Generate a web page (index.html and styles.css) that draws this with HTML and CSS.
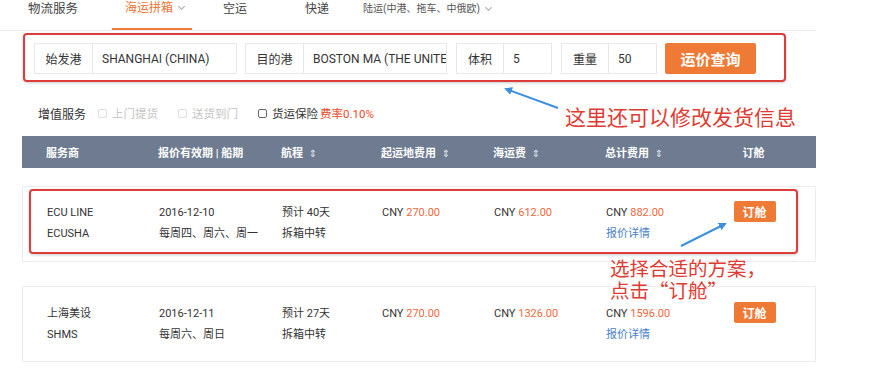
FILE: index.html
```html
<!DOCTYPE html>
<html lang="zh-CN">
<head>
<meta charset="utf-8">
<link rel="stylesheet" href="styles.css">
</head>
<body>
<div class="page">
  <nav class="nav">
    <span class="nav-item nav-title">物流服务</span>
    <span class="nav-item active">海运拼箱<i class="chev"></i></span>
    <span class="nav-item">空运</span>
    <span class="nav-item">快递</span>
    <span class="nav-item land">陆运(中港、拖车、中俄欧)<i class="chev"></i></span>
  </nav>

  <div class="search">
    <div class="field f1"><span class="lbl">始发港</span><span class="val">SHANGHAI (CHINA)</span></div>
    <div class="field f2"><span class="lbl">目的港</span><span class="val">BOSTON MA (THE UNITE</span></div>
    <div class="field f3"><span class="lbl">体积</span><span class="val">5</span></div>
    <div class="field f4"><span class="lbl">重量</span><span class="val">50</span></div>
    <button class="query">运价查询</button>
  </div>

  <div class="extras">
    <span class="extras-title">增值服务</span>
    <span class="opt disabled"><i class="box"></i>上门提货</span>
    <span class="opt disabled"><i class="box"></i>送货到门</span>
    <span class="opt"><i class="box dark"></i>货运保险<em class="rate">费率0.10%</em></span>
  </div>

  <div class="thead">
    <span>服务商</span>
    <span>报价有效期 | 船期</span>
    <span>航程 <i class="sort">⇕</i></span>
    <span>起运地费用 <i class="sort">⇕</i></span>
    <span>海运费 <i class="sort">⇕</i></span>
    <span>总计费用 <i class="sort">⇕</i></span>
    <span class="c">订舱</span>
  </div>

  <div class="row first">
    <div class="cell"><p>ECU LINE</p><p>ECUSHA</p></div>
    <div class="cell"><p>2016-12-10</p><p>每周四、周六、周一</p></div>
    <div class="cell"><p>预计 40天</p><p>拆箱中转</p></div>
    <div class="cell"><p>CNY <b>270.00</b></p></div>
    <div class="cell"><p>CNY <b>612.00</b></p></div>
    <div class="cell"><p>CNY <b>882.00</b></p><p><a class="link">报价详情</a></p></div>
    <div class="cell c"><button class="book">订舱</button></div>
  </div>

  <div class="row second">
    <div class="cell"><p>上海美设</p><p>SHMS</p></div>
    <div class="cell"><p>2016-12-11</p><p>每周六、周日</p></div>
    <div class="cell"><p>预计 27天</p><p>拆箱中转</p></div>
    <div class="cell"><p>CNY <b>270.00</b></p></div>
    <div class="cell"><p>CNY <b>1326.00</b></p></div>
    <div class="cell"><p>CNY <b>1596.00</b></p><p><a class="link">报价详情</a></p></div>
    <div class="cell c"><button class="book">订舱</button></div>
  </div>

  <!-- annotation overlays -->
  <div class="mark mark-search"></div>
  <div class="mark mark-row"></div>
  <div class="note note-1">这里还可以修改发货信息</div>
  <div class="note note-2">选择合适的方案，</div>
  <div class="note note-3">点击“订舱”</div>
  <svg class="arrows" width="892" height="370" viewBox="0 0 892 370">
    <defs>
      <marker id="ah" markerWidth="8" markerHeight="8" refX="6" refY="4" orient="auto" markerUnits="userSpaceOnUse">
        <path d="M0,0 L8,4 L0,8 Z" fill="#3d8fe0"/>
      </marker>
    </defs>
    <line x1="558" y1="108" x2="506" y2="89" stroke="#3d8fe0" stroke-width="2" marker-end="url(#ah)"/>
    <line x1="681" y1="246" x2="725" y2="224" stroke="#3d8fe0" stroke-width="2" marker-end="url(#ah)"/>
  </svg>
</div>
</body>
</html>
```

FILE: styles.css
```css
* { box-sizing: border-box; margin: 0; padding: 0; }
html, body { background: #fff; }
body {
  font-family: Roboto, "Noto Sans CJK SC", "DejaVu Sans", sans-serif;
  color: #333;
  font-size: 12px;
}
.page {
  position: relative;
  width: 892px;
  height: 370px;
  overflow: hidden;
}

/* nav */
.nav {
  display: flex;
  align-items: flex-start;
  height: 31px;
  width: 816px;
  border-bottom: 1px solid #ececec;
  padding-left: 28px;
  font-size: 12px;
  line-height: 18px;
}
.nav-item {
  display: flex;
  align-items: center;
  height: 30px;
  padding-bottom: 12px;
  color: #444;
  white-space: nowrap;
}
.nav-title { margin-right: 34px; font-size: 12.5px; color: #444; }
.nav-item.active {
  color: #f07030;
  padding-left: 13px;
  padding-right: 8px;
  border-bottom: 2px solid #f07a3a;
  margin-right: 31px;
}
.nav-item:nth-child(3) { margin-right: 58px; }
.nav-item:nth-child(4) { margin-right: 34px; }
.nav-item.land { font-size: 10px; color: #555; }
.chev {
  display: inline-block;
  width: 5px;
  height: 5px;
  border-right: 1px solid #aaa;
  border-bottom: 1px solid #aaa;
  transform: rotate(45deg);
  margin-left: 6px;
  margin-top: -4px;
}

/* search */
.search {
  display: flex;
  margin-top: 12px;
  margin-left: 34px;
  height: 31px;
}
.field {
  display: flex;
  border: 1px solid #e8e8e8;
  height: 31px;
}
.f1 { width: 203px; margin-right: 8px; }
.f2 { width: 202px; margin-right: 9px; }
.f3 { width: 96px; margin-right: 9px; }
.f4 { width: 96px; margin-right: 8px; }
.lbl {
  display: flex;
  align-items: center;
  justify-content: center;
  flex: none;
  border-right: 1px solid #e8e8e8;
  color: #333;
  font-size: 12px;
}
.f1 .lbl, .f2 .lbl { width: 58px; }
.f3 .lbl, .f4 .lbl { width: 47px; }
.val {
  display: flex;
  align-items: center;
  flex: 1;
  padding-left: 9px;
  font-size: 12px;
  color: #333;
  white-space: nowrap;
  overflow: hidden;
}
.query {
  width: 91px;
  height: 31px;
  border: none;
  border-radius: 2px;
  background: #ef7a35;
  color: #fff;
  font-family: "Noto Sans CJK SC", sans-serif;
  font-size: 15px;
  font-weight: bold;
}

/* extras */
.extras {
  display: flex;
  align-items: center;
  height: 18px;
  margin-top: 30px;
  padding-left: 38px;
  font-size: 11.5px;
}
.extras-title { color: #333; margin-right: 12px; font-size: 12px; }
.opt { display: flex; align-items: center; color: #333; }
.opt.disabled { color: #c4c4c4; margin-right: 20px; }
.box {
  display: inline-block;
  width: 9px;
  height: 9px;
  border: 1px solid #ddd;
  border-radius: 2px;
  margin-right: 5px;
}
.box.dark { border-color: #666; }
.rate { font-style: normal; color: #ee4a2c; margin-left: 2px; }

/* table */
.thead, .row {
  display: grid;
  grid-template-columns: 112px 123px 100px 112px 112px 110px 77px;
  width: 794px;
  margin-left: 22px;
  padding-left: 24px;
}
.thead {
  margin-top: 14px;
  height: 32px;
  align-items: center;
  background: #6e7b90;
  color: #fff;
  font-size: 11px;
  font-weight: bold;
}
.sort { font-style: normal; font-weight: normal; font-size: 10px; color: #dfe3ea; margin-left: 3px; }
.c { text-align: center; }
.row {
  height: 76px;
  border: 1px solid #ececec;
  padding-top: 15px;
  font-size: 11px;
  color: #333;
}
.row.first { margin-top: 18px; }
.row.second { margin-top: 24px; padding-top: 16px; }
.cell p { line-height: 21px; white-space: nowrap; }
.cell b { font-weight: normal; color: #f0683c; }
.link { color: #4a7fc8; }
.book {
  margin-top: -1px;
  width: 42px;
  height: 21px;
  border: none;
  border-radius: 2px;
  background: #ef7a35;
  color: #fff;
  font-family: "Noto Sans CJK SC", sans-serif;
  font-size: 12px;
  font-weight: bold;
}

/* annotations */
.mark {
  position: absolute;
  border: 2.5px solid #dc3d3a;
  border-radius: 4px;
  box-shadow: 0 1px 3px rgba(0,0,0,0.2);
}
.mark-search { left: 23px; top: 33px; width: 763px; height: 49px; }
.mark-row { left: 29px; top: 189px; width: 769px; height: 65px; }
.note {
  position: absolute;
  color: #e03b32;
  font-family: "Noto Sans CJK SC", sans-serif;
  white-space: nowrap;
}
.note-1 { left: 565px; top: 103px; font-size: 21px; line-height: 26px; }
.note-2 { left: 610px; top: 257px; font-size: 19.5px; line-height: 21px; }
.note-3 { left: 610px; top: 279px; font-size: 19.5px; line-height: 21px; }
.arrows { position: absolute; left: 0; top: 0; pointer-events: none; }
```
